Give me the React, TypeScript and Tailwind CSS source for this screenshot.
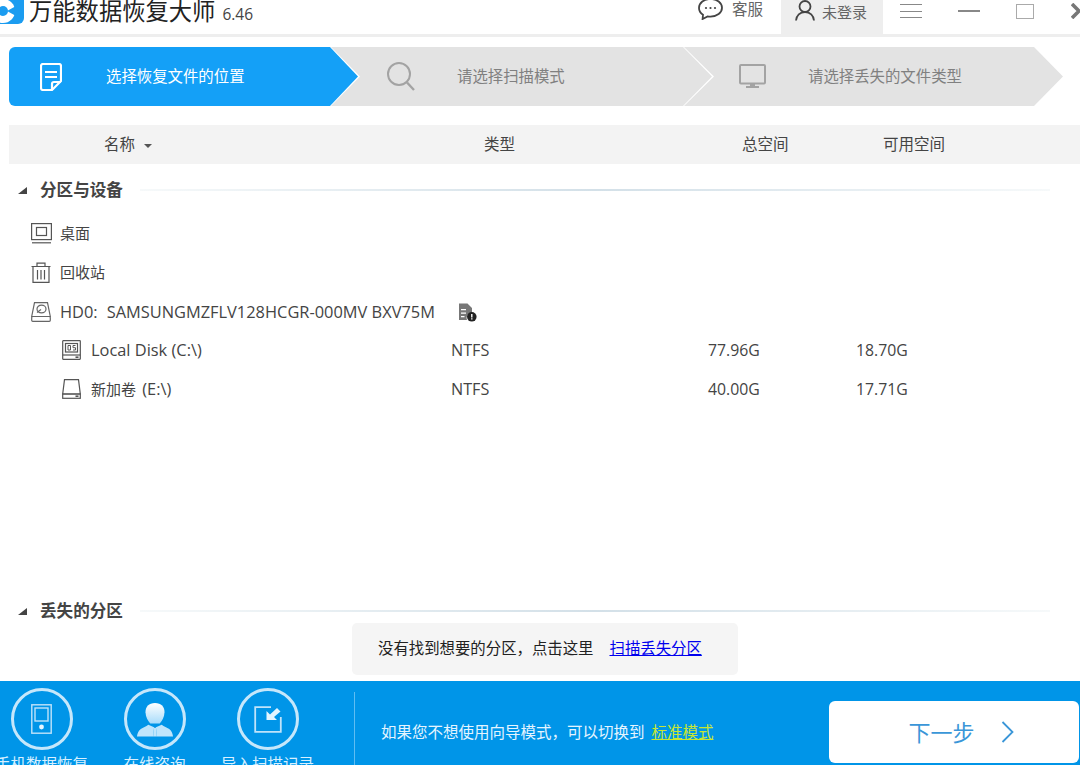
import React from "react";

const Logo = () => (
  <svg width="24" height="24" viewBox="0 0 24 24" className="shrink-0">
    <path d="M-4 -4H24V18a6 6 0 0 1-6 6H-4Z" fill="#1b9cf0" />
    <circle cx="3" cy="11" r="12" fill="#fff" />
    <path d="M7 11L17 5.500V16.500Z" fill="#1b9cf0" />
    <circle cx="3" cy="11" r="5" fill="#1b9cf0" />
  </svg>
);

const ChatIcon = () => (
  <svg width="25" height="22" viewBox="0 0 25 22" fill="none" stroke="#444" strokeWidth="1.800">
    <path d="M12.500 1C6 1 1 4.800 1 10c0 3 1.600 5.200 4 6.800L4.600 21l5-2.600c1 .2 2 .2 2.900.2 6.500 0 11.500-3.800 11.500-8.800S19 1 12.500 1Z" />
    <circle cx="8" cy="10" r="1.100" fill="#444" stroke="none" />
    <circle cx="12.500" cy="10" r="1.100" fill="#444" stroke="none" />
    <circle cx="17" cy="10" r="1.100" fill="#444" stroke="none" />
  </svg>
);

const UserIcon = () => (
  <svg width="20" height="21" viewBox="0 0 20 21" fill="none" stroke="#444" strokeWidth="1.800">
    <circle cx="10" cy="6.500" r="5.500" />
    <path d="M1 20.500c.4-5 4-8.500 9-8.500s8.600 3.500 9 8.500" />
  </svg>
);

const DocIcon = () => (
  <svg width="22" height="28" viewBox="0 0 22 28" fill="none" stroke="#fff" strokeWidth="2.200">
    <path d="M12 27H3a2 2 0 0 1-2-2V3a2 2 0 0 1 2-2h16a2 2 0 0 1 2 2v15Z" strokeLinejoin="round" />
    <path d="M5 9h12M5 14h12" />
    <path d="M12 27v-6a2 2 0 0 1 2-2h7" strokeLinejoin="round" />
  </svg>
);

const SearchIcon = () => (
  <svg width="28" height="29" viewBox="0 0 28 29" fill="none" stroke="#a3a3a3" strokeWidth="2">
    <circle cx="12" cy="12" r="11" />
    <path d="M20 20.500l7 7.500" strokeWidth="2.400" />
  </svg>
);

const MonitorIcon = () => (
  <svg width="27" height="25" viewBox="0 0 27 25">
    <rect x="1" y="1" width="25" height="18.500" rx="1" fill="none" stroke="#a3a3a3" strokeWidth="2" />
    <path d="M11 20h5v2h4v2H7v-2h4Z" fill="#a3a3a3" />
  </svg>
);

const DesktopIcon = () => (
  <svg width="21" height="21" viewBox="0 0 21 21" fill="none" stroke="#555" strokeWidth="1.200">
    <rect x="0.600" y="0.600" width="19.800" height="16" />
    <rect x="5.500" y="4.500" width="10" height="8" />
    <path d="M1 19.800h19" />
  </svg>
);

const TrashIcon = () => (
  <svg width="20" height="21" viewBox="0 0 20 21" fill="none" stroke="#555" strokeWidth="1.200">
    <path d="M0.500 4.500h19M6 4.500V1.200h8v3.300M2 4.500v15.900h16V4.500" />
    <path d="M6.500 8v9.500M10 8v9.500M13.500 8v9.500" />
  </svg>
);

const HddIcon = () => (
  <svg width="20" height="20" viewBox="0 0 20 20" fill="none" stroke="#666" strokeWidth="1.200">
    <path d="M3.500 0.700h13l2.800 13.800H0.700Z" />
    <rect x="0.700" y="14.500" width="18.600" height="4.800" rx="1" />
    <ellipse cx="10.500" cy="7" rx="4.500" ry="3.800" />
    <path d="M6 10.500l4-3" />
  </svg>
);

const OsDriveIcon = () => (
  <svg width="19" height="20" viewBox="0 0 19 20" fill="none" stroke="#555" strokeWidth="1.200">
    <rect x="0.700" y="0.700" width="17.600" height="18.600" rx="0.500" />
    <path d="M0.700 15h17.600" />
    <rect x="3.500" y="3.500" width="12" height="8.500" />
    <path d="M8.500 5.500H6v4.500h2.500ZM13.500 5.500H11v2.200h2.500V10H11" strokeWidth="1" />
    <path d="M13.500 17.200h3" strokeWidth="1.600" />
  </svg>
);

const DriveIcon = () => (
  <svg width="19" height="20" viewBox="0 0 19 20" fill="none" stroke="#555" strokeWidth="1.200">
    <path d="M2.500 0.700h14L18.300 15H0.700Z" />
    <rect x="0.700" y="15" width="17.600" height="4.300" />
    <path d="M13.500 17.200h3" strokeWidth="1.600" />
  </svg>
);

const DiskInfoIcon = () => (
  <svg width="19" height="19" viewBox="0 0 19 19">
    <path d="M1 0.500h8.500L14 5v5a5 5 0 0 0-5 7H1Z" fill="#777" />
    <path d="M3 6h5v1.300H3ZM3 9.500h5v1.300H3ZM3 13h3.500v1.300H3Z" fill="#fff" />
    <circle cx="13.800" cy="13.800" r="4.800" fill="#222" />
    <path d="M13.100 11h1.400v3.600h-1.400ZM13.100 15.200h1.400v1.300h-1.400Z" fill="#fff" />
  </svg>
);

const PhoneIcon = () => (
  <svg width="21" height="30" viewBox="0 0 21 30" fill="none" stroke="#bfe3fa" strokeWidth="1.400">
    <rect x="0.800" y="0.800" width="19.400" height="28.400" />
    <rect x="4" y="4" width="13" height="13" />
    <circle cx="10.500" cy="23" r="2.400" fill="#e6f5ff" stroke="none" />
  </svg>
);

const AgentIcon = () => (
  <svg width="38" height="34" viewBox="0 0 40 40" preserveAspectRatio="none" className="mt-[2px]">
    <defs>
      <linearGradient id="agent" x1="0" y1="0" x2="0" y2="1">
        <stop offset="0" stopColor="#ffffff" />
        <stop offset="1" stopColor="#a9dcfb" />
      </linearGradient>
    </defs>
    <path d="M20 0c6.500 0 10.200 4.500 10 11-.2 6-2.500 10-5 13h-10c-2.500-3-4.800-7-5-13C9.800 4.500 13.500 0 20 0Z" fill="url(#agent)" />
    <path d="M13 25.500l6 3-1 11H1c.5-4 1.500-7 4-9 2.500-1.800 5.500-3 8-5ZM27 25.500l-6 3 1 11h17c-.5-4-1.500-7-4-9-2.500-1.800-5.500-3-8-5Z" fill="#bfe5fc" />
    <path d="M18.800 29h2.400l.800 10.500h-4Z" fill="#bfe5fc" />
  </svg>
);

const ImportIcon = () => (
  <svg width="28" height="27" viewBox="0 0 28 27" fill="none">
    <path d="M17 1.200H1.200v24.600h25.600V11" stroke="#bfe3fa" strokeWidth="1.800" />
    <path d="M12.500 14V5l3.500 3.500L23 2l3.500 3.500L20 11l3 3Z" fill="#e4f5ff" />
  </svg>
);

const SectionTitle = ({ title }: { title: string }) => (
  <div className="flex items-center h-[38px]">
    <span className="ml-[18px] w-0 h-0 border-l-[9px] border-l-transparent border-b-[7px] border-b-[#444]" />
    <span className="ml-[13px] text-[16.600px] font-semibold text-[#444] whitespace-nowrap">{title}</span>
    <div className="ml-[17px] mr-[30px] flex-1 h-[2px] bg-gradient-to-r from-[#f6f9fa] via-[#d3e0e8] to-[#f6f9fa]" />
  </div>
);

const DiskRow = ({
  icon,
  name,
  fs,
  total,
  free,
}: {
  icon: React.ReactNode;
  name: React.ReactNode;
  fs: string;
  total: string;
  free: string;
}) => (
  <div className="grid grid-cols-[451px_257px_148px_1fr] items-center h-[39px] text-[15.800px] text-[#444]">
    <div className="flex items-center pl-[62px] gap-[10px] text-[16.400px]">
      {icon}
      <span>{name}</span>
    </div>
    <span className="text-[16.200px]">{fs}</span>
    <span>{total}</span>
    <span>{free}</span>
  </div>
);

const ToolItem = ({ icon, label }: { icon: React.ReactNode; label: string }) => (
  <div className="w-[113px] shrink-0 flex flex-col items-center">
    <div className="w-[62px] h-[62px] shrink-0 rounded-full border-[3px] border-[#c5e7fb] flex items-center justify-center">
      {icon}
    </div>
    <span className="mt-[4px] shrink-0 text-[15.500px] leading-[20px] text-[#d8f0ff] whitespace-nowrap">{label}</span>
  </div>
);

export default function App() {
  return (
    <div className="w-[1080px] h-[765px] overflow-hidden flex flex-col bg-white font-['Open_Sans','Noto_Sans_CJK_SC',sans-serif]">
      {/* title bar, the top of it is cut off in the shot */}
      <header className="h-[37px] shrink-0 flex border-b-[3px] border-[#eeeeee]">
        <div className="flex items-start">
          <Logo />
          <span className="ml-[5px] -mt-[5px] text-[23.300px] leading-[32px] text-[#222] whitespace-nowrap">万能数据恢复大师</span>
          <span className="ml-[7px] mt-[4px] text-[15.500px] leading-[20px] text-[#444]">6.46</span>
        </div>
        <div className="ml-auto flex items-start">
          <div className="-mt-[2px]">
            <ChatIcon />
          </div>
          <span className="ml-[9px] text-[15.500px] leading-[18px] text-[#666]">客服</span>
          <div className="ml-[18px] w-[102px] h-[34px] bg-[#eeeeee] flex items-start pl-[14px]">
            <UserIcon />
            <span className="ml-[7px] mt-[3px] text-[15px] leading-[18px] text-[#666]">未登录</span>
          </div>
          <div className="ml-[17px] mt-[4px] w-[22px] h-[14px] flex flex-col justify-between">
            <div className="h-[1px] bg-[#888]" />
            <div className="h-[1px] bg-[#888]" />
            <div className="h-[1px] bg-[#888]" />
          </div>
          <div className="ml-[36px] mt-[10px] w-[22px] h-[2px] bg-[#888]" />
          <div className="ml-[36px] mt-[4px] w-[18px] h-[15px] border border-[#aaa]" />
          <svg width="9" height="16" viewBox="0 0 9 16" className="ml-[37px] mt-[3px] shrink-0" fill="none" stroke="#777" strokeWidth="3.600">
            <path d="M1 1l7 7-7 7" />
          </svg>
        </div>
      </header>

      {/* wizard steps */}
      <div className="mt-[10px] ml-[9px] h-[59px] shrink-0 flex">
        <div className="relative z-30 w-[351px] h-[59px] shrink-0 bg-white [clip-path:polygon(0_0,322px_0,351px_50%,322px_100%,0_100%)]">
          <div className="w-[349px] h-[59px] bg-[#14a0f7] rounded-l-[6px] [clip-path:polygon(0_0,321px_0,349px_50%,321px_100%,0_100%)] flex items-center pl-[31px] text-white text-[15.400px]">
            <DocIcon />
            <span className="ml-[44px]">选择恢复文件的位置</span>
          </div>
        </div>
        <div className="relative z-20 -ml-[30px] w-[384px] h-[59px] shrink-0 bg-white [clip-path:polygon(0_0,354px_0,384px_50%,354px_100%,0_100%)]">
          <div className="w-[382px] h-[59px] bg-[#e3e3e3] [clip-path:polygon(0_0,353px_0,382px_50%,353px_100%,0_100%)] flex items-center pl-[57px] text-[#808080] text-[15.400px]">
            <SearchIcon />
            <span className="ml-[42px]">请选择扫描模式</span>
          </div>
        </div>
        <div className="relative z-10 -ml-[31px] w-[380px] h-[59px] shrink-0 bg-[#e3e3e3] [clip-path:polygon(0_0,351px_0,380px_50%,351px_100%,0_100%)] flex items-center pl-[56px] text-[#808080] text-[15.400px]">
          <MonitorIcon />
          <span className="ml-[42px]">请选择丢失的文件类型</span>
        </div>
      </div>

      {/* list header */}
      <div className="mt-[19px] ml-[9px] h-[39px] shrink-0 grid grid-cols-[475px_258px_141px_1fr] items-center bg-[#f3f3f3] text-[15.500px] text-[#444]">
        <div className="flex items-center pl-[95px]">
          <span>名称</span>
          <span className="ml-[9px] mt-[2px] w-0 h-0 border-x-[4.500px] border-x-transparent border-t-[4px] border-t-[#555]" />
        </div>
        <span>类型</span>
        <span>总空间</span>
        <span>可用空间</span>
      </div>

      <main className="flex-1 flex flex-col pt-[7px] min-h-0">
        <SectionTitle title="分区与设备" />
        <div className="mt-[5px] flex flex-col">
          <div className="flex items-center h-[39px] pl-[31px] gap-[8px] text-[15px] text-[#444]">
            <DesktopIcon />
            <span>桌面</span>
          </div>
          <div className="flex items-center h-[39px] pl-[31px] gap-[9px] text-[15px] text-[#444]">
            <TrashIcon />
            <span>回收站</span>
          </div>
          <div className="flex items-center h-[39px] pl-[31px] text-[16.400px] text-[#444]">
            <HddIcon />
            <span className="ml-[9px] mt-[1px]">HD0:</span>
            <span className="ml-[9px] mt-[1px] whitespace-nowrap">SAMSUNGMZFLV128HCGR-000MV BXV75M</span>
            <div className="ml-[23px] mt-[2px]">
              <DiskInfoIcon />
            </div>
          </div>
          <DiskRow icon={<OsDriveIcon />} name="Local Disk (C:\)" fs="NTFS" total="77.96G" free="18.70G" />
          <DiskRow
            icon={<DriveIcon />}
            name={
              <>
                <span className="text-[15px] mr-[2px]">新加卷</span> (E:\)
              </>
            }
            fs="NTFS"
            total="40.00G"
            free="17.71G"
          />
        </div>

        <div className="mt-auto">
          <SectionTitle title="丢失的分区" />
        </div>
        <div className="mt-[-7px] mb-[6px] ml-[352px] w-[386px] h-[52px] shrink-0 flex items-center pl-[26px] bg-[#f5f5f5] rounded-[5px] text-[15.400px] text-[#222]">
          <span>没有找到想要的分区，点击这里</span>
          <a href="#" className="ml-[16px] text-[#0000ee] underline">
            扫描丢失分区
          </a>
        </div>
      </main>

      {/* bottom bar */}
      <footer className="h-[84px] shrink-0 flex bg-[#0095e8] overflow-hidden">
        <div className="-ml-[15px] pt-[7px] flex">
          <ToolItem icon={<PhoneIcon />} label="手机数据恢复" />
          <ToolItem icon={<AgentIcon />} label="在线咨询" />
          <ToolItem icon={<ImportIcon />} label="导入扫描记录" />
        </div>
        <div className="ml-[30px] mt-[11px] w-[1px] bg-[#5fbdf2]" />
        <div className="ml-[26px] h-[100px] flex items-center pb-[50px] pt-[52px] text-[15.500px] text-[#e4f4ff] whitespace-nowrap">
          <span>如果您不想使用向导模式，可以切换到</span>
          <a href="#" className="ml-[7px] text-[#c8e632] underline">
            标准模式
          </a>
        </div>
        <button className="ml-auto mr-[1px] mt-[20px] w-[250px] h-[62px] bg-white rounded-[6px] flex items-center justify-center pl-[14px] text-[22px] text-[#3a96d8]">
          <span>下一步</span>
          <svg width="13" height="22" viewBox="0 0 13 22" className="ml-[26px]" fill="none" stroke="#3a96d8" strokeWidth="1.800">
            <path d="M1.500 1l10 10-10 10" />
          </svg>
        </button>
      </footer>
    </div>
  );
}
